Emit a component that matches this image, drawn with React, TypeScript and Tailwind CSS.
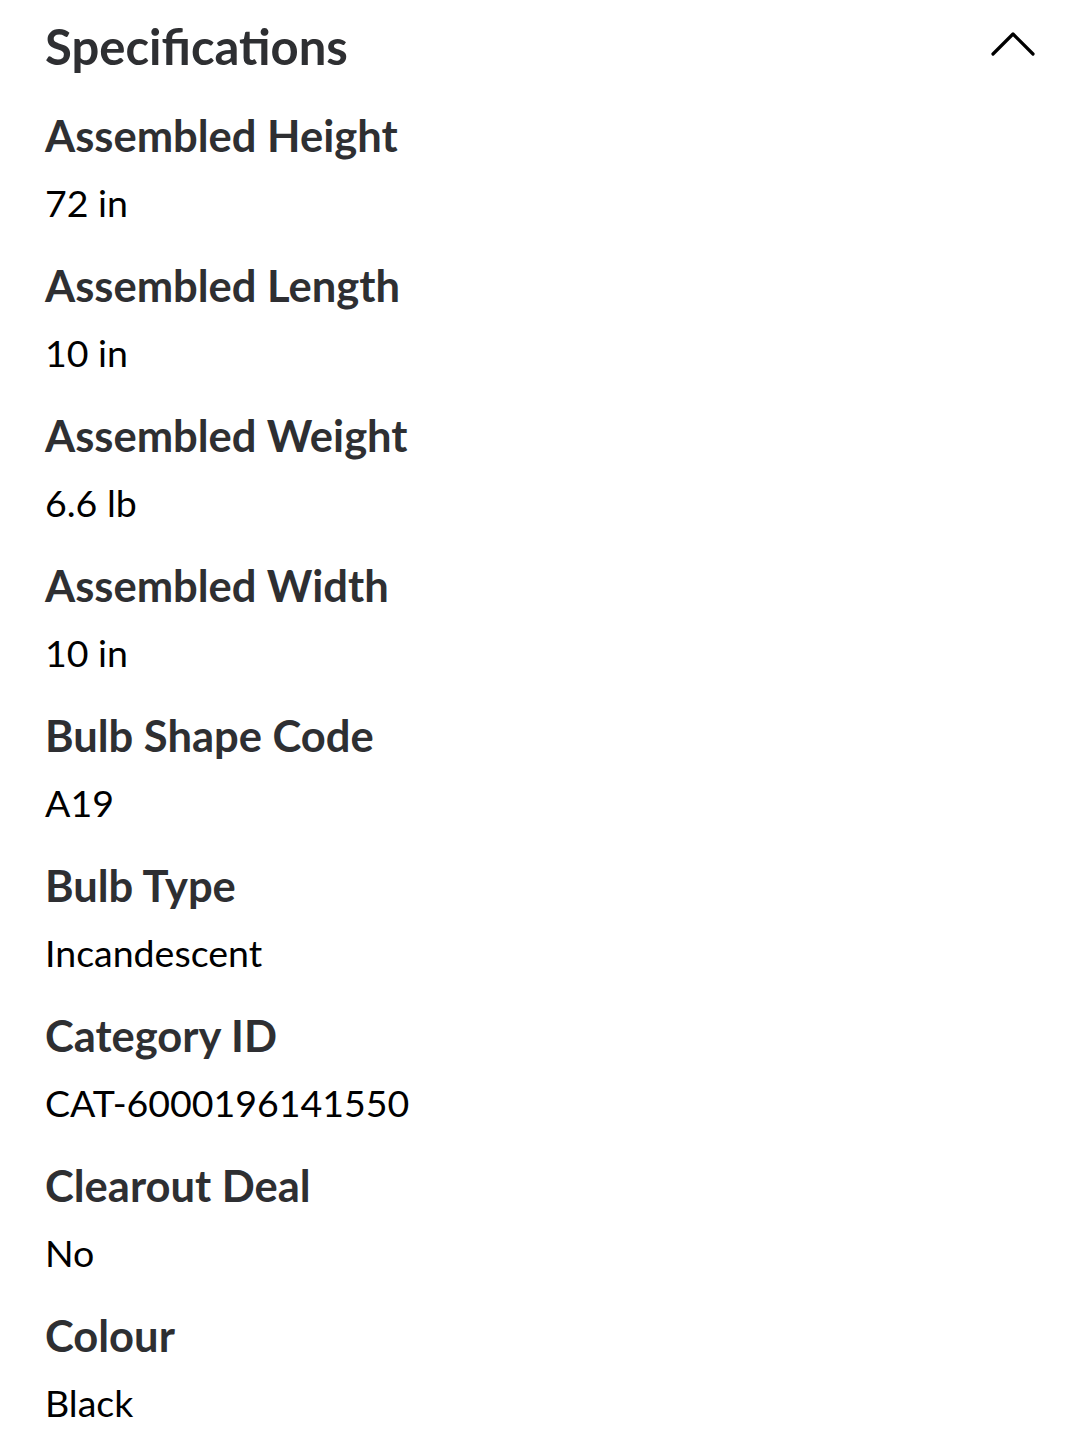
import React from "react";

const specs: [string, string][] = [
  ["Assembled Height", "72 in"],
  ["Assembled Length", "10 in"],
  ["Assembled Weight", "6.6 lb"],
  ["Assembled Width", "10 in"],
  ["Bulb Shape Code", "A19"],
  ["Bulb Type", "Incandescent"],
  ["Category ID", "CAT-6000196141550"],
  ["Clearout Deal", "No"],
  ["Colour", "Black"],
];

export default function App() {
  return (
    <div className="w-[1091px] h-[1440px] bg-white overflow-hidden px-[45px] pt-[16px]" style={{ fontFamily: "Lato, 'Open Sans', sans-serif" }}>
      <div className="flex items-center justify-between h-[60px]">
        <h2 className="text-[49px] leading-[60px] font-bold text-[#2e2f32]">Specifications</h2>
        <svg width="46" height="28" viewBox="0 0 46 28" className="mr-[10px] -mt-[4px]">
          <path d="M3 24 L23 4 L43 24" fill="none" stroke="#000" strokeWidth="3.2" strokeLinecap="round" strokeLinejoin="round" />
        </svg>
      </div>
      <div className="mt-[34px] flex flex-col">
        {specs.map(([k, v]) => (
          <div key={k} className="h-[150px]">
            <div className="text-[43.5px] leading-[50px] font-bold text-[#2e2f32]">{k}</div>
            <div className="mt-[18px] text-[37.5px] leading-[50px] text-black">{v}</div>
          </div>
        ))}
      </div>
    </div>
  );
}
